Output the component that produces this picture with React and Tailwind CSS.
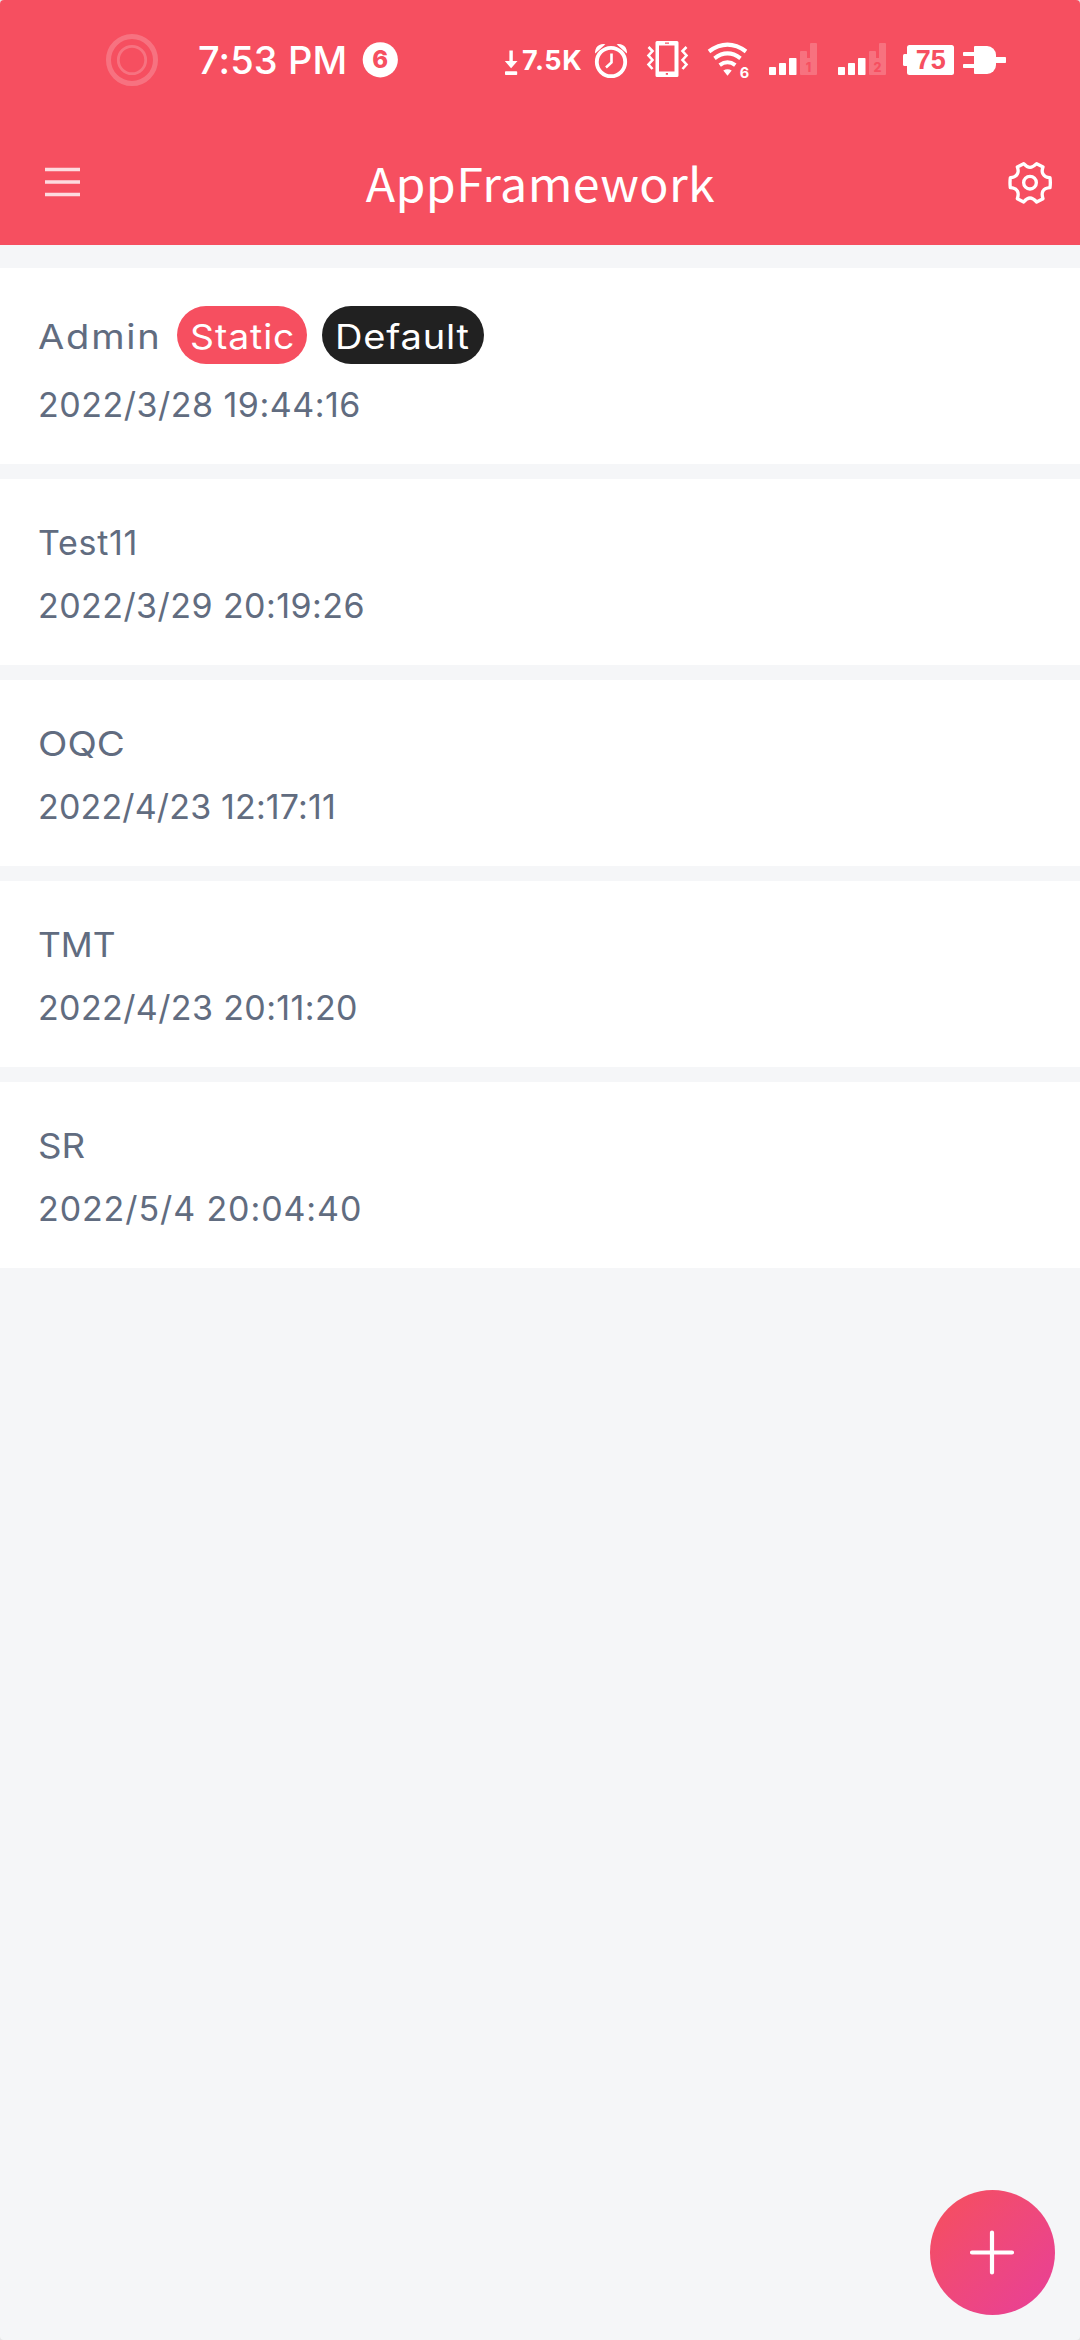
import React from "react";

const ROWS = [
  { name: "Test11", nameClass: "tracking-[0.7px]", date: "2022/3/29 20:19:26", dateClass: "tracking-[0.44px]" },
  { name: "OQC", nameClass: "scale-x-[1.13]", date: "2022/4/23 12:17:11", dateClass: "tracking-[0.16px]" },
  { name: "TMT", nameClass: "scale-x-[1.04]", date: "2022/4/23 20:11:20", dateClass: "tracking-[0.38px]" },
  { name: "SR", nameClass: "scale-x-[1.08]", date: "2022/5/4 20:04:40", dateClass: "tracking-[0.9px]" },
];

function Signal({ label }) {
  return (
    <svg className="h-[120px] w-[50px] shrink-0" viewBox="0 0 50 120" fill="#fff">
      <rect x="0" y="67" width="7" height="8" rx="0.8" />
      <rect x="10" y="63" width="7" height="12" rx="0.8" />
      <rect x="20" y="58" width="7.5" height="17" rx="0.8" />
      <path d="M31 52 q0-1 1-1 h5 q1 0 1 1 v6 h3 v-14 q0-1 1-1 h5 q1 0 1 1 v30 q0 1-1 1 h-15 q-1 0-1-1z" opacity="0.2" />
      <text x="39.5" y="72" textAnchor="middle" fontSize="12.5" fontWeight="800" fill="#f64f60" fontFamily="Inter, sans-serif">{label}</text>
    </svg>
  );
}

function StatusBar() {
  return (
    <div className="flex h-[120px] w-full items-start pl-[100px] text-white">
      <svg className="h-[120px] w-[64px] shrink-0" viewBox="100 0 64 120" fill="none" stroke="#fff" opacity="0.2">
        <circle cx="132" cy="60" r="23.5" strokeWidth="5" />
        <circle cx="132" cy="60" r="13.7" strokeWidth="2.8" />
      </svg>
      <div className="ml-[34px] w-[158px] shrink-0 whitespace-nowrap text-[38px] font-medium leading-[120px] tracking-[0.1px]">7:53 PM</div>
      <svg className="ml-[4px] h-[120px] w-[40px] shrink-0" viewBox="360 0 40 120">
        <circle cx="380.3" cy="59.8" r="17.6" fill="#fff" />
        <text x="380.3" y="68" textAnchor="middle" fontSize="24" fontWeight="800" fill="#f64f60" fontFamily="Inter, sans-serif">6</text>
      </svg>
      <svg className="ml-[100px] h-[120px] w-[21px] shrink-0" viewBox="500 0 21 120" fill="#fff">
        <path d="M509.4 50.5h3.4v10.5h4.7l-6.4 7.2-6.3-7.2h4.6z" />
        <rect x="505" y="71.2" width="12.2" height="3.8" rx="0.8" />
      </svg>
      <div className="w-[69px] shrink-0 whitespace-nowrap pl-px text-[27px] font-bold leading-[121px] tracking-[0.6px]">7.5K</div>
      <svg className="h-[120px] w-[50px] shrink-0" viewBox="590 0 50 120" fill="none" stroke="#fff">
        <circle cx="611" cy="62" r="14.2" strokeWidth="3.8" />
        <path d="M595.2 53.5a8.2 8.2 0 0 1 10.2-9.3z M626.8 53.5a8.2 8.2 0 0 0-10.2-9.3z" fill="#fff" stroke="none" />
        <path d="M611.5 53.5v9l-5.5 5" strokeWidth="2.6" />
      </svg>
      <svg className="h-[120px] w-[60px] shrink-0" viewBox="640 0 60 120" fill="none" stroke="#fff">
        <path fillRule="evenodd" fill="#fff" stroke="none" d="M657 41h20q1.5 0 1.5 1.5v33q0 1.5-1.5 1.5h-20q-1.5 0-1.5-1.5v-33q0-1.5 1.5-1.5z M659 45.5v26h15.5v-26z M665 42.5v1.200h4v-1.200z M665.800 73v1.800h2.200v-1.800z" />
        <path d="M648 47l4 4-4 4.5 4 4.5-4 4.5 4 4.5M686 47l-4 4 4 4.5-4 4.5 4 4.5-4 4.5" strokeWidth="2.6" transform="translate(0.5 0)" />
      </svg>
      <svg className="h-[120px] w-[60px] shrink-0" viewBox="700 0 60 120" fill="none" stroke="#fff">
        <path d="M709 51.5q18.5-13.6 37 0" strokeWidth="4.2" />
        <path d="M714.5 58.3q13-9.8 26 0" strokeWidth="4" />
        <path d="M719.7 65.2q7.8-5.8 15.6 0" strokeWidth="4" />
        <path d="M723.3 70.5q4.2-2.4 8.4 0l-4.2 5.2z" fill="#fff" stroke="none" />
        <text x="744.5" y="78.3" textAnchor="middle" fontSize="14.5" fontWeight="700" fill="#fff" stroke="none" fontFamily="Inter, sans-serif">6</text>
      </svg>
      <div className="ml-[9px] flex shrink-0 gap-[19px]">
        <Signal label="1" />
        <Signal label="2" />
      </div>
      <svg className="ml-[12px] h-[120px] w-[60px] shrink-0" viewBox="900 0 60 120">
        <rect x="907" y="45" width="47" height="30" rx="2.5" fill="#fff" />
        <rect x="903" y="54" width="5" height="12" rx="1.5" fill="#fff" />
        <text x="930.8" y="69.3" textAnchor="middle" fontSize="27" fontWeight="700" fill="#f64f60" fontFamily="Liberation Sans, sans-serif">75</text>
      </svg>
      <svg className="h-[120px] w-[50px] shrink-0" viewBox="960 0 50 120" fill="#fff">
        <rect x="963" y="52" width="12" height="4" rx="0.8" />
        <rect x="963" y="64" width="12" height="4" rx="0.8" />
        <path d="M975 46h12a9 9 0 0 1 9 9v10a9 9 0 0 1-9 9h-12q-1 0-1-1v-26q0-1 1-1z" />
        <rect x="995" y="57" width="11" height="6" rx="0.8" />
      </svg>
    </div>
  );
}

function TitleBar() {
  return (
    <div className="flex h-[125px] items-start justify-between text-white">
      <svg className="h-[125px] w-[100px]" viewBox="0 120 100 125" stroke="#fff" strokeWidth="3.4" opacity="0.8">
        <path d="M45 169.5h35M45 182h35M45 194.5h35" />
      </svg>
      <h1 className="scale-x-[1.05] whitespace-nowrap font-['Noto_Sans_CJK_SC','Noto_Sans',sans-serif] text-[46px] font-normal leading-[125px] tracking-[0.4px]">AppFramework</h1>
      <svg className="h-[125px] w-[100px]" viewBox="980 120 100 125" fill="none" stroke="#fff">
        <g transform="translate(960 130) scale(0.33333)" strokeWidth="10" strokeLinejoin="round">
          <path d="M191 101 Q201 112 210 112 Q219 112 230 101 L249 111 Q244 125 249 132 Q254 142 270 143 Q272 158 270 173 Q254 174 249 183 Q244 191 249 206 L230 216 Q219 204 210 204 Q201 204 191 216 L172 206 Q177 191 172 183 Q167 174 151 173 Q149 158 151 143 Q167 142 172 132 Q177 125 172 111 Z" />
          <circle cx="210" cy="158" r="19" />
        </g>
      </svg>
    </div>
  );
}

export default function App() {
  return (
    <div className="bg-neutral-200">
      <div className="flex h-[2340px] w-[1080px] flex-col overflow-hidden rounded-[4px] bg-[#f5f6f8] font-[Inter,sans-serif]">
        <header className="h-[245px] shrink-0 bg-[#f64f60]">
          <StatusBar />
          <TitleBar />
        </header>
        <main className="flex grow flex-col gap-[15px] pt-[23px] text-[34px] font-normal text-[#616c80]">
          <section className="h-[196px] bg-white pl-[38px] pt-[38px]">
            <div className="flex h-[67px] items-start">
              <span className="w-[139px] origin-left scale-x-[1.12] leading-[61px] tracking-[1.6px]">Admin</span>
              <span className="flex h-[58px] w-[130px] rounded-[29px] bg-[#f64f60] pl-[13px] text-white">
                <span className="origin-left scale-x-[1.1] leading-[61px] tracking-[0.8px]">Static</span>
              </span>
              <span className="ml-[15px] flex h-[58px] w-[162px] rounded-[29px] bg-[#212121] pl-[13px] text-white">
                <span className="origin-left scale-x-[1.12] leading-[61px] tracking-[0.7px]">Default</span>
              </span>
            </div>
            <div className="leading-[63px] tracking-[0.5px]">2022/3/28 19:44:16</div>
          </section>
          {ROWS.map((row) => (
            <section key={row.name} className="h-[186px] bg-white pl-[38px] pt-[32px] leading-[63px]">
              <div className={`w-fit origin-left ${row.nameClass}`}>{row.name}</div>
              <div className={row.dateClass}>{row.date}</div>
            </section>
          ))}
        </main>
        <button aria-label="Add" className="fixed bottom-[25px] right-[25px] flex size-[125px] items-center justify-center rounded-full bg-linear-to-br from-[#f64f5a] to-[#e83e98]">
          <svg className="size-[125px]" viewBox="0 0 125 125" stroke="#fff" strokeWidth="4.2" strokeLinecap="round">
            <path d="M42 62.5h40M62 42.5v40" />
          </svg>
        </button>
      </div>
    </div>
  );
}
